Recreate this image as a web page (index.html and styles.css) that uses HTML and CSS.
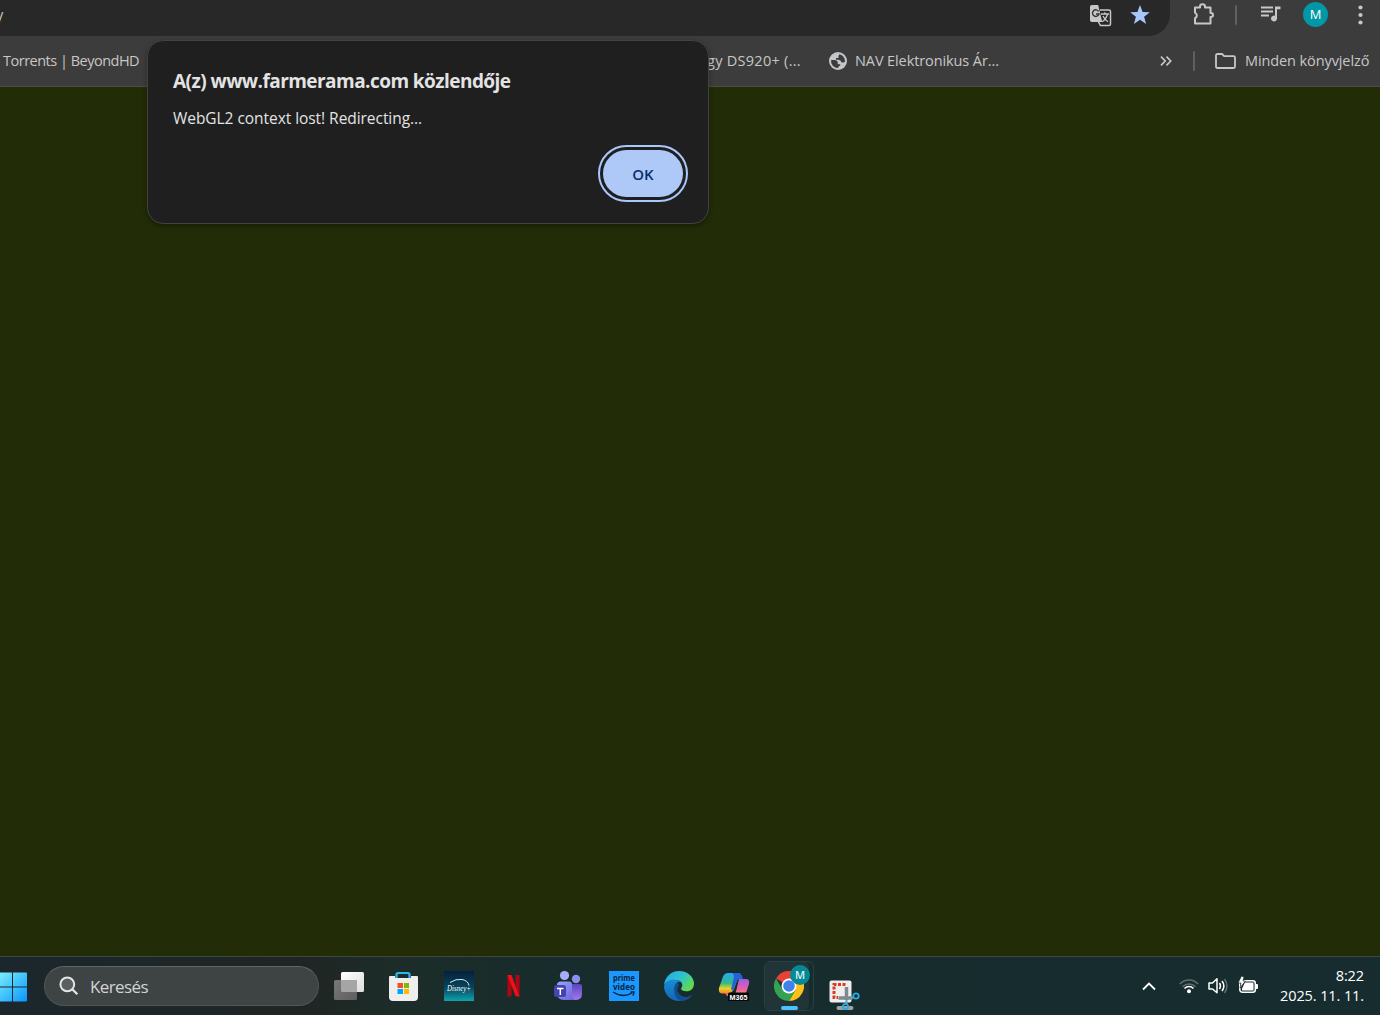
FILE: index.html
```html
<!DOCTYPE html>
<html lang="hu">
<head>
    <meta charset="utf-8">
    <title>Farmerama</title>
    <link rel="stylesheet" href="styles.css">
</head>
<body>
<header class="toolbar">
    <div class="omnibox">
        <span class="url">y</span>
        <svg class="translate" width="22" height="22" viewBox="0 0 22 22">
            <path d="M10 5h9q1.500 0 1.500 1.500v12.500q0 1.500-1.500 1.500h-8.500l-2-3.500" fill="none" stroke="#c7c7c7" stroke-width="1.500"/>
            <path d="M1.800 0h6.400l4 17H1.800Q0 17 0 15.200V1.800Q0 0 1.800 0z" fill="#c7c7c7"/>
            <path d="M8.700 6.500A3.300 3.300 0 1 0 9 9H6" fill="none" stroke="#333" stroke-width="1.400"/>
            <path d="M11 9h8M14.800 7.300V9M17.500 9q-1.200 5-5.300 7.700M13 11q1.800 4 5 5.800" fill="none" stroke="#c7c7c7" stroke-width="1.300"/>
        </svg>
        <svg class="star" width="22" height="22" viewBox="0 0 22 22"><path d="M11 1l2.600 7 7.200.200-5.700 4.600 2 7.200-6.100-4.200L4.900 20l2-7.200L1.200 8.200 8.400 8z" fill="#a8c7fa"/></svg>
    </div>
    <svg class="puzzle" width="22" height="23" viewBox="0 0 22 23"><path d="M2 4.500h5V3.500a2.500 2.200 0 0 1 5 0v1h5.500v5.500h.500a2 2 0 0 1 0 4h-.500v6.500H2v-5.300a3 3 0 0 0 0-5.500z" fill="none" stroke="#c7c7c7" stroke-width="2" stroke-linejoin="round"/></svg>
    <span class="divider"></span>
    <svg class="media" width="20" height="16" viewBox="0 0 20 16"><path d="M0 1.500h12M0 5.500h12M0 9.500h8" stroke="#c7c7c7" stroke-width="1.800"/><path d="M14 .500h5.500v2.700H16v9.300a3 3 0 1 1-2-2.800z" fill="#c7c7c7"/></svg>
    <span class="profile">M</span>
    <svg class="dots" width="5" height="20" viewBox="0 0 5 20" fill="#c7c7c7"><circle cx="2.500" cy="2.500" r="2.100"/><circle cx="2.500" cy="10" r="2.100"/><circle cx="2.500" cy="17.500" r="2.100"/></svg>
</header>

<nav class="bookmarks">
    <span class="bookmark torrents">Torrents | BeyondHD</span>
    <span class="bookmark synology">gy DS920+ (...</span>
    <svg class="globe" width="18" height="18" viewBox="0 0 18 18"><circle cx="9" cy="9" r="9" fill="#c4c7c9"/><path d="M10.500 2.200Q9.500 3 9.500 4H7v2.200H5v2.200h5.300q2 0 2 2.200h2.200q1 0 1.500-.800-.700 5-5.300 6.100v-2.300H8.500v-2.200L2.200 7.500Q3.500 2 10.500 2.200z" fill="#c4c7c9"/><path d="M10.500 2.200a7 7 0 0 1 5.500 7.500q-.500.800-2 .800h-1.500q-.500-2.500-3-2.700H7V6h2.500V4.200q0-1.200 1-2zM2.100 8h3.400q3 0 3.200 2.600v1.600h2.500v1.500q-2 0-2 2.300A7 7 0 0 1 2.100 8z" fill="#3c3c3c"/></svg>
    <span class="bookmark nav">NAV Elektronikus Ár...</span>
    <svg class="more" width="12" height="10" viewBox="0 0 12 10"><path d="M1 .700L5.200 5 1 9.300M6.500.700L10.700 5 6.500 9.300" fill="none" stroke="#c7c7c7" stroke-width="1.700"/></svg>
    <span class="divider"></span>
    <svg class="folder" width="21" height="16" viewBox="0 0 21 16"><path d="M1 2.500Q1 1 2.500 1H7l2.200 2.200H18.500Q20 3.200 20 4.700v8.800Q20 15 18.500 15h-16Q1 15 1 13.500z" fill="none" stroke="#c7c7c7" stroke-width="1.800"/></svg>
    <span class="bookmark all">Minden könyvjelző</span>
</nav>

<main class="page"></main>

<footer class="taskbar">
    <svg class="start" width="27" height="30" viewBox="0 0 27 30">
        <defs><linearGradient id="win" gradientUnits="userSpaceOnUse" x1="-2" y1="1" x2="27" y2="30"><stop offset="0" stop-color="#7df0ff"/><stop offset="1" stop-color="#0794fb"/></linearGradient></defs>
        <path d="M-3 .500h15v14H-3zM13 .500h13q1 0 1 1v13H13zM-3 15.500h15v14H-3zM13 15.500h14v13q0 1-1 1H13z" fill="url(#win)"/>
    </svg>
    <div class="search">
        <svg width="20" height="20" viewBox="0 0 20 20"><circle cx="8.300" cy="8.300" r="6.900" fill="#5b5f60" stroke="#e4e6e6" stroke-width="2"/><path d="M13.300 13.300l5 5" stroke="#e4e6e6" stroke-width="2.300"/></svg>
        <span>Keresés</span>
    </div>
    <div class="apps">
        <svg class="app" viewBox="0 0 32 32">
            <defs><linearGradient id="view" x2="1" y2="1"><stop stop-color="#fff"/><stop offset="1" stop-color="#ddd"/></linearGradient><linearGradient id="view2" x2="1" y2="1"><stop stop-color="#777"/><stop offset="1" stop-color="#5e605e"/></linearGradient></defs>
            <rect x="8" y="2" width="23" height="20" rx="1.500" fill="url(#view)"/><rect x="1" y="10" width="23" height="20" rx="1.500" fill="url(#view2)"/><path d="M8 10h16v12H9.500Q8 22 8 20.500z" fill="#a5a5a5"/>
        </svg>
        <svg class="app" viewBox="1 0 32 32">
            <path d="M9.500 8V4.500Q9.500 3 11 3h10q1.500 0 1.500 1.500V8" fill="none" stroke="#2cb7ec" stroke-width="2.200"/>
            <path d="M2 7q0-1 1-1h5v2h16V6h6q1 0 1 1v20q0 4-4 4H6q-4 0-4-4z" fill="#eee"/>
            <path d="M10.500 13h5.500v5h-5.500z" fill="#f25022"/><path d="M17 13h5v5h-5z" fill="#7fba00"/><path d="M10.500 19h5.500v5h-5.500z" fill="#00a4ef"/><path d="M17 19h5v5h-5z" fill="#ffb900"/>
        </svg>
        <svg class="app" viewBox="0 0 32 32">
            <defs><linearGradient id="disney" x2="0" y2="1"><stop stop-color="#06203c"/><stop offset=".55" stop-color="#07445c"/><stop offset="1" stop-color="#11a2ae"/></linearGradient></defs>
            <path d="M1 1h30v30H1z" fill="url(#disney)"/><path d="M7 12.500Q13 8.500 19 9.500t7 6" fill="none" stroke="#d7edf1" stroke-width="1"/>
            <text class="disney" x="4" y="20.500" textLength="24" lengthAdjust="spacingAndGlyphs">Disney+</text>
        </svg>
        <svg class="app" viewBox="-.5 0 32 32"><path d="M9 5h4v21l-4 .800zM17 5h4v21.800l-4-.800z" fill="#b10610"/><path d="M9 5h4l8 21.800-4-.800z" fill="#ee111d"/></svg>
        <svg class="app" viewBox="0 0 32 32">
            <defs><linearGradient id="teams" x2="1" y2="1"><stop stop-color="#9ba5ff"/><stop offset="1" stop-color="#6a62d8"/></linearGradient><linearGradient id="teams2" x2="0" y2="1"><stop stop-color="#5646bc"/><stop offset="1" stop-color="#a678ed"/></linearGradient></defs>
            <circle cx="11.500" cy="5.500" r="4.600" fill="#a9acf8"/><circle cx="23" cy="9" r="4.200" fill="#8d8df0"/>
            <path d="M18 14h9q2 0 2 2v8q0 6-7 6h-8z" fill="url(#teams2)"/><path d="M8 11.500h8q3 0 3 3V25q0 3 3 5H11q-7 0-7-7v-8q0-3.500 4-3.500z" fill="url(#teams)"/>
            <rect x="1" y="15" width="12" height="12" rx="2.500" fill="#4543ae"/><path d="M4 18.500h6.500M7.300 18.500v6.500" stroke="#fff" stroke-width="1.500"/>
        </svg>
        <svg class="app" viewBox="0 0 32 32">
            <path d="M1 1h30v30H1z" fill="#1a98ff"/>
            <text class="prime" x="5" y="11.200" textLength="22" lengthAdjust="spacingAndGlyphs">prime</text><text class="prime" x="5" y="19.500" textLength="22" lengthAdjust="spacingAndGlyphs">video</text>
            <path d="M5 22q10 6.500 19 1M22.500 22h3.500q0 2-1.300 3.500" fill="none" stroke="#08253f" stroke-width="1.400"/>
        </svg>
        <svg class="app" viewBox="0 0 32 32">
            <defs>
                <linearGradient id="edge" x2="1" y2=".600"><stop offset=".15" stop-color="#27aee8"/><stop offset=".6" stop-color="#30c5c7"/><stop offset="1" stop-color="#65d94b"/></linearGradient>
                <linearGradient id="edge2" x2="0" y2="1"><stop stop-color="#168ed8"/><stop offset="1" stop-color="#1465b4"/></linearGradient>
            </defs>
            <path d="M1 15.500C2 6.500 8 1 16 1c9 0 15 6.200 15 12.500 0 5-3.200 7.800-7.500 7.800-3.500 0-5.400-1.300-5.400-2.600 0-1 1.200-1.500 1.200-3.600 0-3-3-5.100-6.800-5.100C7 10 2.500 12 1 15.500z" fill="url(#edge)"/>
            <path d="M1 16Q3 9.500 10.500 9.500q5 0 7.500 2.500-4-1-6 4c-2 6.500 3 12 9.500 12q3.700 0 7.200-2.200Q24 31 16 31C7 31 1 24 1 16z" fill="url(#edge2)"/>
            <path d="M15 12q-4 2-4 8 0 7.500 6.500 11 8-.500 12-6-8 4-13-.500-4.500-4.500-.500-9.500z" fill="#124f91"/>
        </svg>
        <svg class="app" viewBox="0 0 32 32">
            <defs>
                <linearGradient id="copilot" x2="0" y2="1"><stop stop-color="#22aaf3"/><stop offset=".5" stop-color="#36b889"/><stop offset=".75" stop-color="#e9d424"/><stop offset="1" stop-color="#f38434"/></linearGradient>
                <linearGradient id="copilot2" x2="0" y2="1"><stop stop-color="#9d5ceb"/><stop offset=".6" stop-color="#ed5f9e"/><stop offset="1" stop-color="#ffa35f"/></linearGradient>
            </defs>
            <path d="M10 3h12L17 16q-2 7-6 7.500H4Q0 23 1 18L5 6.500Q6.500 3 10 3z" fill="url(#copilot)"/><path d="M14 3h6q3 0 4 3l1 3h-3q-3 0-4 4l-3 8-2-2 3-12q0-3-2-4z" fill="#2463d5"/>
            <path d="M21 9h7q4 0 3 5l-3 9q-1 3-5 3h-6l3-13z" fill="url(#copilot2)"/><path d="M7 23h5v3H9z" fill="#f26a48"/>
            <rect x="10" y="22.500" width="21" height="8.500" rx="1.500" fill="#080808"/><text class="badge" x="11.500" y="29.700" textLength="18" lengthAdjust="spacingAndGlyphs">M365</text>
        </svg>
    </div>
    <div class="active">
        <div class="window">
            <svg width="30" height="30" viewBox="0 0 30 30"><path d="M15 15L2 7.500A15 15 0 0 1 28 7.500H15z" fill="#e94235"/><path d="M15 15V7.500h13A15 15 0 0 1 15 30l6.500-11.200z" fill="#fbc116"/><path d="M15 15l6.500 3.800L15 30A15 15 0 0 1 2 7.500l6.500 11.300z" fill="#34a351"/><circle cx="15" cy="15" r="7.500" fill="#fff"/><circle cx="15" cy="15" r="5.800" fill="#4080eb"/></svg>
            <span class="chrome-user">M</span>
        </div>
    </div>
    <svg class="snip" width="32" height="34" viewBox="0 0 32 34">
        <rect x="8.500" y="30" width="17" height="4" rx="2" fill="#9ca2a3"/>
        <rect x="1.500" y="4.500" width="22" height="22" rx="2" fill="#eee"/>
        <path d="M17.500 8.500H6v13h4" fill="none" stroke="#da3b1e" stroke-width="3" stroke-dasharray="3 1.500"/>
        <path d="M18.500 11v13M10.500 22h14" stroke="#81898d" stroke-width="3.500"/>
        <path d="M18.500 24v4M23 22l3-1" stroke="#5aa5c4" stroke-width="2"/>
        <circle cx="17.500" cy="30.500" r="2.600" fill="none" stroke="#29a9e1" stroke-width="1.800"/><circle cx="28" cy="20" r="2.700" fill="none" stroke="#29a9e1" stroke-width="1.800"/>
    </svg>
    <div class="tray">
        <svg class="up" width="14" height="9" viewBox="0 0 14 9"><path d="M1 7.500l6-6 6 6" fill="none" stroke="#fff" stroke-width="1.800"/></svg>
        <svg class="wifi" width="20" height="16" viewBox="0 0 20 16" fill="none" stroke-width="1.500"><path d="M.800 6a12.500 12.500 0 0 1 18.400 0M3.500 8.700a9 9 0 0 1 13 0" stroke="#5d6d70"/><path d="M5.500 10.500a6.300 6.300 0 0 1 9 0" stroke="#fff"/><circle cx="10" cy="13.200" r="2" fill="#fff"/></svg>
        <svg class="volume" width="20" height="18" viewBox="0 0 20 18" fill="none" stroke="#fff" stroke-width="1.500"><path d="M1 6h3.500L9 1.800v14L4.500 12H1z" stroke-linejoin="round"/><path d="M11.500 6q2 3 0 6M14 4q3.800 5 0 10"/><path d="M16.500 2q5 7 0 14" stroke="#5d6d70"/></svg>
        <svg class="battery" width="21" height="18" viewBox="0 0 21 18"><rect x="1.800" y="4.800" width="15.500" height="11.500" rx="2.500" fill="none" stroke="#fff" stroke-width="1.500"/><path d="M18 8h1q1 0 1 1v3q0 1-1 1h-1z" fill="#fff"/><path d="M7 6.500h8.500v8H4v-2z" fill="#fff"/><path d="M3.500 0L0 7h3l-1 5 5.500-7H5l1-4z" fill="#fff" stroke="#172c2e" stroke-width=".700"/></svg>
        <div class="clock"><span class="time">8:22</span><span class="date">2025. 11. 11.</span></div>
    </div>
</footer>

<div class="dialog">
    <h1>A(z) www.farmerama.com közlendője</h1>
    <p>WebGL2 context lost! Redirecting...</p>
    <button>OK</button>
</div>
</body>
</html>
```

FILE: styles.css
```css
* {
    box-sizing: border-box;
}

body {
    margin: 0;
    width: 1380px;
    height: 1015px;
    overflow: hidden;
    display: flex;
    flex-direction: column;
    background: #222c07;
    font-family: "Open Sans", "Noto Sans", sans-serif;
    font-size: 14.5px;
    color: #c7c7c7;
    white-space: nowrap;
}

svg {
    display: block;
    flex: none;
}

/* browser bars */
.toolbar {
    height: 36px;
    display: flex;
    align-items: flex-start;
    background: #3c3c3c;
}

.omnibox {
    width: 1170px;
    height: 36px;
    display: flex;
    background: #282828;
    border-bottom-right-radius: 21px 22px;
}

/* only the tail of the address is on screen */
.url {
    width: 1090px;
    margin-left: -4px;
    padding-top: 5px;
    line-height: 20px;
}

.translate {
    margin: 5px 0 0 4px;
}

.star {
    margin: 4px 0 0 17px;
}

.puzzle {
    margin: 3px 0 0 23px;
}

.divider {
    width: 2px;
    height: 20px;
    border-radius: 1px;
    background: #606060;
}

.toolbar .divider {
    margin: 5px 0 0 20px;
}

.media {
    margin: 6px 0 0 24px;
}

.profile {
    width: 25px;
    height: 25px;
    margin: 2px 0 0 22px;
    border-radius: 50%;
    background: #0097a7;
    color: #fff;
    font-size: 13px;
    line-height: 25px;
    text-align: center;
}

.dots {
    margin: 5px 0 0 30px;
}

.bookmarks {
    height: 51px;
    display: flex;
    align-items: center;
    padding: 0 0 1px 3px;
    background: #3c3c3c;
    border-bottom: 1px solid #4c4c4a;
}

.bookmark {
    line-height: 20px;
    letter-spacing: -0.1px;
}

.torrents {
    width: 704px;
    letter-spacing: -0.5px;
}

.synology {
    width: 122px;
    letter-spacing: 0.28px;
}

.nav {
    width: 297px;
    margin-left: 8px;
}

.globe {
    margin-top: 1px;
}

.more {
    margin: 1px 21px 0 8px;
}

.folder {
    margin: 1px 9px 0 20px;
}

.page {
    flex: 1;
    background: #222c07;
}

/* javascript alert */
.dialog {
    position: absolute;
    left: 147px;
    top: 40px;
    width: 562px;
    height: 184px;
    display: flex;
    flex-direction: column;
    padding: 26px 24px 0 25px;
    background: #1f1f1f;
    border: 1px solid #424340;
    border-radius: 16px;
    color: #e3e3e3;
    box-shadow: 0 2px 5px rgba(0, 0, 0, 0.35);
}

.dialog h1 {
    margin: 0;
    font-size: 19px;
    font-weight: 700;
    line-height: 28px;
    letter-spacing: -0.55px;
}

.dialog p {
    margin: 13px 0 0;
    font-size: 15.5px;
    line-height: 20px;
    letter-spacing: -0.05px;
}

.dialog button {
    width: 80px;
    height: 47px;
    margin: 22px 1px 0 0;
    padding: 0;
    align-self: flex-end;
    border: 0;
    border-radius: 24px;
    outline: 2px solid #a8c7fa;
    outline-offset: 3px;
    background: #aec9f7;
    color: #062e6f;
    font: 600 15px "Open Sans", sans-serif;
}

/* windows taskbar */
.taskbar {
    height: 59px;
    display: flex;
    align-items: center;
    border-top: 1px solid #3e4742;
    background: linear-gradient(90deg, #1b272d, #202524 22%, #1c2d29 29%, #172c2d 42%, #172c2e);
}

.start {
    margin-top: 1px;
}

.search {
    width: 275px;
    height: 40px;
    margin-left: 17px;
    display: flex;
    align-items: center;
    padding-left: 14px;
    gap: 11px;
    border: 1px solid #505555;
    border-top-color: #606565;
    border-radius: 20px;
    background: #3e4344;
    color: #d2d4d4;
    font-size: 17px;
    letter-spacing: -0.6px;
}

.apps {
    display: flex;
    gap: 23px;
    margin-left: 14px;
}

.app {
    width: 32px;
    height: 32px;
}

.disney {
    font: italic 9px "Liberation Serif", serif;
    fill: #fff;
}

.prime {
    font: bold 8.5px "Open Sans", sans-serif;
    fill: #08253f;
}

.badge {
    font: bold 7.5px "Liberation Sans", sans-serif;
    fill: #fff;
}

.active {
    width: 50px;
    height: 50px;
    margin-left: 14px;
    border: 1px solid #294043;
    border-radius: 6px;
}

.window {
    position: relative;
    width: 45px;
    height: 48px;
    padding: 9px 0 0 9px;
    border-right: 1px solid #13292b;
    border-radius: 5px;
    background: #213437;
}

.window::after {
    content: "";
    position: absolute;
    left: 16px;
    bottom: 0;
    width: 17px;
    height: 4px;
    border-radius: 2px;
    background: #4cc2ff;
}

.chrome-user {
    position: absolute;
    left: 25px;
    top: 3px;
    width: 20px;
    height: 20px;
    border-radius: 50%;
    background: #078895;
    color: #d5f2f4;
    font-size: 11px;
    font-weight: 600;
    line-height: 20px;
    text-align: center;
}

.snip {
    margin: 14px 0 0 14px;
}

.tray {
    margin-left: auto;
    padding-right: 16px;
    display: flex;
    align-items: center;
    color: #fff;
}

.wifi {
    margin-left: 23px;
}

.volume {
    margin-left: 9px;
}

.battery {
    margin: -2px 0 0 10px;
}

.clock {
    width: 105px;
    display: flex;
    flex-direction: column;
    align-items: flex-end;
    line-height: 20px;
    letter-spacing: -0.1px;
}
```
